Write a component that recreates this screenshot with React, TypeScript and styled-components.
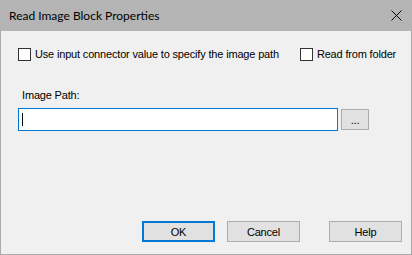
import React from "react";
import styled, { createGlobalStyle } from "styled-components";

const GlobalStyle = createGlobalStyle`
  html, body {
    margin: 0;
    padding: 0;
    background: #f0f0f0;
  }
  * {
    box-sizing: border-box;
  }
`;

// Window frame
const Dialog = styled.div`
  width: 412px;
  height: 255px;
  display: flex;
  flex-direction: column;
  background: #f0f0f0;
  border: 1px solid #aaaaaa;
  border-top: none;
  font-family: "Liberation Sans", Arial, sans-serif;
  font-size: 11px;
  letter-spacing: -0.17px;
  color: #000;
`;

const TitleBar = styled.div`
  height: 31px;
  margin: 0 -1px;
  background: #b4b4b4;
  display: flex;
  align-items: center;
  justify-content: space-between;
  padding: 0 10px 0 9px;
`;

const Title = styled.span`
  font-family: Lato, "Noto Sans", sans-serif;
  font-size: 12px;
  letter-spacing: 0;
  color: #000;
  margin-top: -1px;
`;

const CloseIcon = () => (
  <svg width="11" height="11" viewBox="0 0 11 11">
    <path d="M0.5 0.5 L10.5 10.5 M10.5 0.5 L0.5 10.5" stroke="#000" strokeWidth="1" />
  </svg>
);

const Body = styled.div`
  flex: 1;
  display: flex;
  flex-direction: column;
  padding: 17px 9px 12px 17px;
`;

const OptionRow = styled.div`
  display: flex;
  align-items: center;
  gap: 21px;
  height: 13px;
`;

const CheckLabel = styled.label`
  display: flex;
  align-items: center;
  gap: 4px;
  line-height: 13px;
  white-space: nowrap;
`;

const Box = styled.span`
  width: 13px;
  height: 13px;
  border: 1px solid #333333;
  background: #ffffff;
  flex: none;
`;

const FieldLabel = styled.div`
  margin: 28px 0 0 4px;
  line-height: 13px;
`;

const PathRow = styled.div`
  display: flex;
  align-items: center;
  gap: 3px;
  margin-top: 6px;
`;

const PathInput = styled.div`
  width: 320px;
  height: 23px;
  border: 1px solid #0078d7;
  background: #ffffff;
  display: flex;
  align-items: center;
  padding-left: 3px;
`;

const Caret = styled.span`
  width: 1px;
  height: 13px;
  background: #000;
`;

const Spacer = styled.div`
  flex: 1;
`;

const ButtonRow = styled.div`
  display: flex;
  justify-content: flex-end;
  gap: 12px;
`;

const Button = styled.div<{ $default?: boolean; $wide?: number; $push?: number }>`
  width: ${(p) => p.$wide ?? 73}px;
  height: 21px;
  margin-left: ${(p) => p.$push ?? 0}px;
  display: flex;
  align-items: center;
  justify-content: center;
  background: #e1e1e1;
  border: ${(p) => (p.$default ? "2px solid #0078d7" : "1px solid #adadad")};
`;

export default function App() {
  return (
    <>
      <GlobalStyle />
      <Dialog>
        <TitleBar>
          <Title>Read Image Block Properties</Title>
          <CloseIcon />
        </TitleBar>
        <Body>
          <OptionRow>
            <CheckLabel>
              <Box />
              Use input connector value to specify the image path
            </CheckLabel>
            <CheckLabel>
              <Box />
              Read from folder
            </CheckLabel>
          </OptionRow>
          <FieldLabel>Image Path:</FieldLabel>
          <PathRow>
            <PathInput>
              <Caret />
            </PathInput>
            <Button $wide={28}>...</Button>
          </PathRow>
          <Spacer />
          <ButtonRow>
            <Button $default>OK</Button>
            <Button>Cancel</Button>
            <Button $push={17}>Help</Button>
          </ButtonRow>
        </Body>
      </Dialog>
    </>
  );
}
